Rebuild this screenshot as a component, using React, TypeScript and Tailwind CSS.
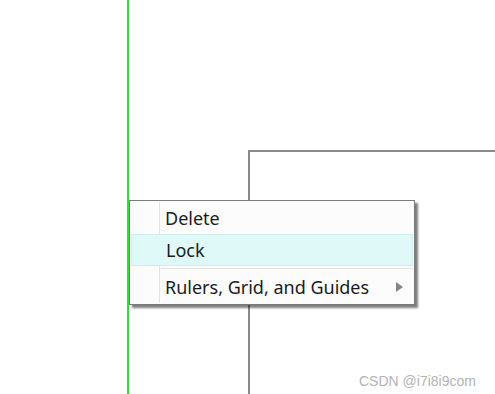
export default function App() {
  return (
    <div className="relative w-[495px] h-[394px] overflow-hidden bg-white">
      {/* guide line */}
      <div className="absolute left-[127px] top-0 h-full w-[2px] bg-[#2fe02f]" />
      {/* shape on canvas */}
      <div className="absolute left-[248px] top-[150px] w-[300px] h-[300px] border-l-2 border-t-2 border-[#8a8a8a]" />

      {/* context menu */}
      <div
        className="absolute left-[129px] top-[200px] w-[286px] border border-[#7a7a7a] bg-[#fcfcfc] shadow-[3px_3px_2px_rgba(0,0,0,0.5)] py-[1px] text-[18px] text-[#1b1b1b]"
        style={{ fontFamily: '"Noto Sans", "Open Sans", sans-serif' }}
      >
        <div className="relative">
          <div className="absolute left-[29px] top-0 bottom-0 w-px bg-[#e3e3e3]" />
          <div className="relative flex items-center h-[32px] pl-[35px]">Delete</div>
          <div className="relative flex items-center h-[32px] pl-[34px] mx-[1px] bg-[#dff8f8] border border-[#cdeeee]">Lock</div>
          <div className="relative h-[5px] flex items-center pl-[31px] pr-[1px]">
            <div className="h-px w-full bg-[#e3e3e3]" />
          </div>
          <div className="relative flex items-center h-[32px] pl-[35px] pr-[10px]">
            <span className="flex-1">Rulers, Grid, and Guides</span>
            <svg width="8" height="10" viewBox="0 0 8 10">
              <path d="M0 0 L7 5 L0 10 Z" fill="#858585" />
            </svg>
          </div>
        </div>
      </div>

      <div
        className="absolute left-[359px] top-[371px] text-[14px] text-[#b3b3b3]"
        style={{ fontFamily: '"Liberation Sans", Arial, sans-serif' }}
      >
        CSDN @i7i8i9com
      </div>
    </div>
  );
}
